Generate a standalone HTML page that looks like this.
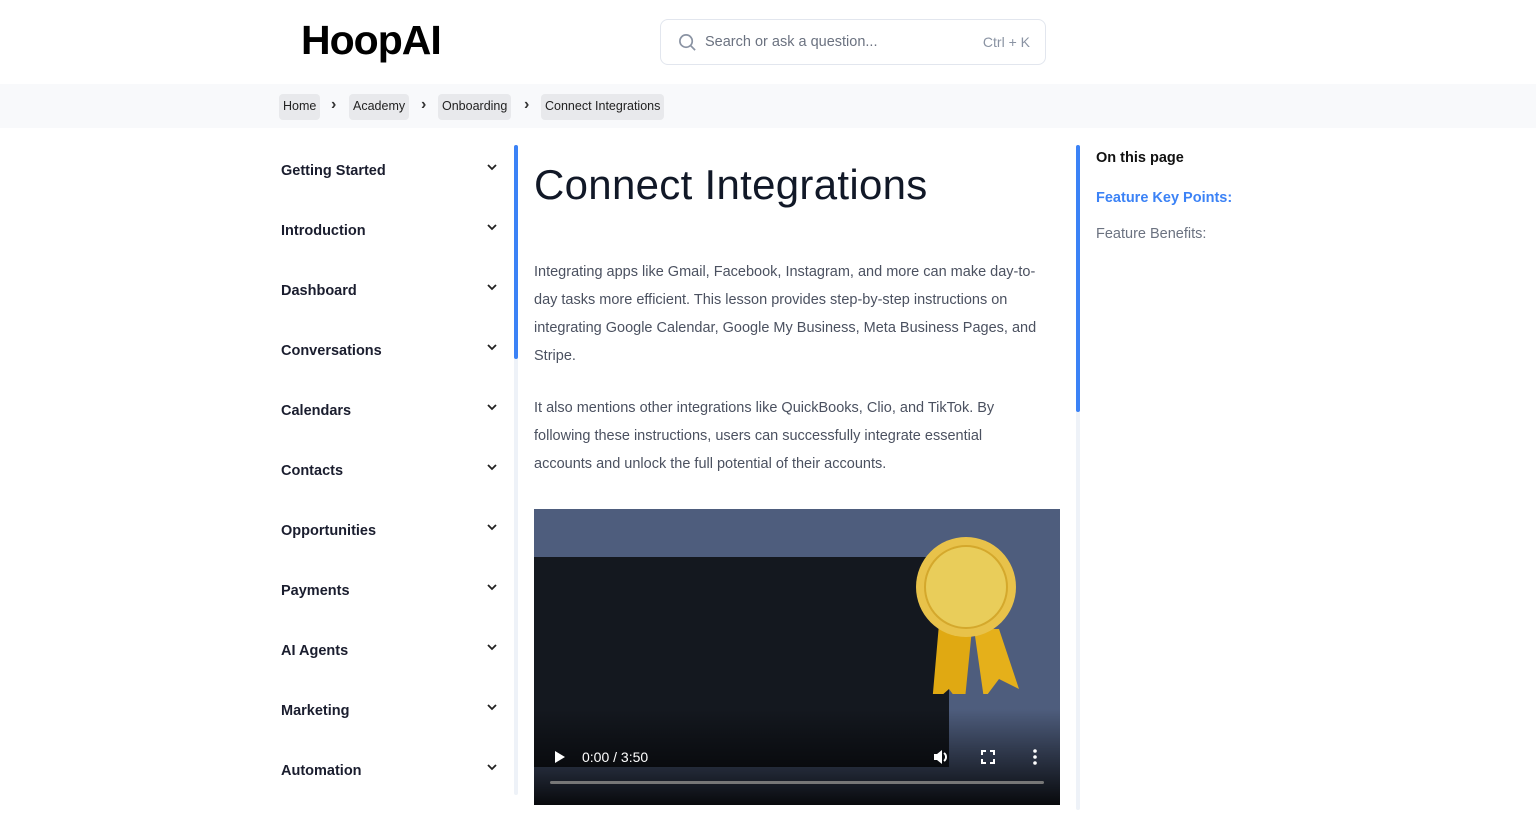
<!DOCTYPE html>
<html><head><meta charset="utf-8"><style>
*{margin:0;padding:0;box-sizing:border-box}
body{width:1536px;height:826px;overflow:hidden;background:#fff;font-family:"Liberation Sans",sans-serif;position:relative}
.hdr{position:absolute;left:0;top:0;width:1536px;height:84px;background:#fff;box-shadow:0 1px 3px rgba(0,0,0,.06)}
.logo{position:absolute;left:301px;top:17px;font-size:41px;font-weight:bold;color:#000;letter-spacing:-1px}
.search{position:absolute;left:660px;top:19px;width:386px;height:46px;border:1px solid #e2e6ee;border-radius:8px}
.search .t{position:absolute;left:44px;top:14px;font-size:14.5px;color:#6b7280}
.search .k{position:absolute;right:15px;top:14px;font-size:14px;color:#8a93a3}
.bc{position:absolute;left:0;top:84px;width:1536px;height:44px;background:#f8f9fb}
.chip{position:absolute;top:94px;height:26px;background:#e8e9ec;border-radius:4px;font-size:12.5px;color:#222;line-height:25px;padding:0 4px}
.sep{position:absolute;top:96px;font-size:16px;color:#333;font-weight:bold}
.nav{position:absolute;left:281px;font-size:14.5px;font-weight:bold;color:#1a1d2e}
.chev{position:absolute;left:486px}
.sb{position:absolute;width:4px;border-radius:2px}
h1{position:absolute;left:534px;top:161px;font-size:42px;font-weight:normal;color:#111827;letter-spacing:.3px}
.p{position:absolute;left:534px;width:515px;font-size:14.5px;line-height:28px;color:#4b5160}
.video{position:absolute;left:534px;top:509px;width:526px;height:296px;background:#4e5d7d;overflow:hidden}
</style></head><body>
<div class="hdr">
<div class="logo">HoopAI</div>
<div class="search">
<svg style="position:absolute;left:17px;top:13px" width="19" height="19" viewBox="0 0 20 20" fill="none" stroke="#8a93a3" stroke-width="1.8"><circle cx="8.5" cy="8.5" r="6.5"/><path d="M13.5 13.5L18 18"/></svg>
<span class="t">Search or ask a question...</span><span class="k">Ctrl + K</span></div>
</div>
<div class="bc"></div>
<div class="chip" style="left:279px">Home</div><span class="sep" style="left:331px">›</span>
<div class="chip" style="left:349px">Academy</div><span class="sep" style="left:421px">›</span>
<div class="chip" style="left:438px">Onboarding</div><span class="sep" style="left:524px">›</span>
<div class="chip" style="left:541px">Connect Integrations</div>

<div class="nav" style="top:163px">Getting Started</div>
<div class="nav" style="top:223px">Introduction</div>
<div class="nav" style="top:283px">Dashboard</div>
<div class="nav" style="top:343px">Conversations</div>
<div class="nav" style="top:403px">Calendars</div>
<div class="nav" style="top:463px">Contacts</div>
<div class="nav" style="top:523px">Opportunities</div>
<div class="nav" style="top:583px">Payments</div>
<div class="nav" style="top:643px">AI Agents</div>
<div class="nav" style="top:703px">Marketing</div>
<div class="nav" style="top:763px">Automation</div>
<svg class="chev" style="top:163px" width="12" height="8" viewBox="0 0 12 8" fill="none" stroke="#222" stroke-width="1.8"><path d="M2 2l4 4 4-4"/></svg>
<svg class="chev" style="top:223px" width="12" height="8" viewBox="0 0 12 8" fill="none" stroke="#222" stroke-width="1.8"><path d="M2 2l4 4 4-4"/></svg>
<svg class="chev" style="top:283px" width="12" height="8" viewBox="0 0 12 8" fill="none" stroke="#222" stroke-width="1.8"><path d="M2 2l4 4 4-4"/></svg>
<svg class="chev" style="top:343px" width="12" height="8" viewBox="0 0 12 8" fill="none" stroke="#222" stroke-width="1.8"><path d="M2 2l4 4 4-4"/></svg>
<svg class="chev" style="top:403px" width="12" height="8" viewBox="0 0 12 8" fill="none" stroke="#222" stroke-width="1.8"><path d="M2 2l4 4 4-4"/></svg>
<svg class="chev" style="top:463px" width="12" height="8" viewBox="0 0 12 8" fill="none" stroke="#222" stroke-width="1.8"><path d="M2 2l4 4 4-4"/></svg>
<svg class="chev" style="top:523px" width="12" height="8" viewBox="0 0 12 8" fill="none" stroke="#222" stroke-width="1.8"><path d="M2 2l4 4 4-4"/></svg>
<svg class="chev" style="top:583px" width="12" height="8" viewBox="0 0 12 8" fill="none" stroke="#222" stroke-width="1.8"><path d="M2 2l4 4 4-4"/></svg>
<svg class="chev" style="top:643px" width="12" height="8" viewBox="0 0 12 8" fill="none" stroke="#222" stroke-width="1.8"><path d="M2 2l4 4 4-4"/></svg>
<svg class="chev" style="top:703px" width="12" height="8" viewBox="0 0 12 8" fill="none" stroke="#222" stroke-width="1.8"><path d="M2 2l4 4 4-4"/></svg>
<svg class="chev" style="top:763px" width="12" height="8" viewBox="0 0 12 8" fill="none" stroke="#222" stroke-width="1.8"><path d="M2 2l4 4 4-4"/></svg>

<div class="sb" style="left:514px;top:145px;height:650px;background:#eef2f8"></div>
<div class="sb" style="left:514px;top:145px;height:214px;background:#3b82f6"></div>
<div class="sb" style="left:1076px;top:145px;height:665px;background:#eef2f8"></div>
<div class="sb" style="left:1076px;top:145px;height:267px;background:#3b82f6"></div>

<h1>Connect Integrations</h1>
<div class="p" style="top:258px">Integrating apps like Gmail, Facebook, Instagram, and more can make day-to-day tasks more efficient. This lesson provides step-by-step instructions on integrating Google Calendar, Google My Business, Meta Business Pages, and Stripe.</div>
<div class="p" style="top:394px;width:490px">It also mentions other integrations like QuickBooks, Clio, and TikTok. By following these instructions, users can successfully integrate essential accounts and unlock the full potential of their accounts.</div>

<div class="video">
<div style="position:absolute;left:0;top:48px;width:415px;height:210px;background:#14181f"></div>
<div style="position:absolute;left:0;top:200px;width:526px;height:96px;background:linear-gradient(rgba(0,0,0,0),rgba(0,0,0,.9))"></div>
<svg style="position:absolute;left:380px;top:20px" width="130" height="165" viewBox="0 0 130 165">
<path d="M25 95 L18 175 L35 160 L50 180 L58 100Z" fill="#e0a912"/>
<path d="M60 100 L70 170 L85 150 L105 160 L85 100Z" fill="#e5b01a"/>
<circle cx="52" cy="58" r="50" fill="#e8c24a"/><circle cx="52" cy="58" r="41" fill="#e9cd5a" stroke="#d4a82c" stroke-width="2"/>
</svg>
<svg style="position:absolute;left:20px;top:241px" width="12" height="14" viewBox="0 0 12 14"><path d="M1 1L11 7L1 13Z" fill="#fff"/></svg>
<div style="position:absolute;left:48px;top:240px;font-size:14px;color:#fff">0:00 / 3:50</div>
<svg style="position:absolute;left:398px;top:239px" width="18" height="18" viewBox="0 0 18 18" fill="#fff"><path d="M2 6h3l5-4v14l-5-4H2z"/><path d="M12 5a5 5 0 010 8" stroke="#fff" stroke-width="2" fill="none"/></svg>
<svg style="position:absolute;left:447px;top:241px" width="14" height="14" viewBox="0 0 14 14" fill="none" stroke="#fff" stroke-width="2"><path d="M1 5V1h4M9 1h4v4M13 9v4H9M5 13H1V9"/></svg>
<svg style="position:absolute;left:498px;top:239px" width="6" height="18" viewBox="0 0 6 18" fill="#fff"><circle cx="3" cy="3" r="1.8"/><circle cx="3" cy="9" r="1.8"/><circle cx="3" cy="15" r="1.8"/></svg>
<div style="position:absolute;left:16px;top:272px;width:494px;height:3px;background:#777;border-radius:2px"></div>
</div>

<div style="position:absolute;left:1096px;top:150px;font-size:14.5px;font-weight:bold;color:#111">On this page</div>
<div style="position:absolute;left:1096px;top:190px;font-size:14.5px;font-weight:bold;color:#3b82f6">Feature Key Points:</div>
<div style="position:absolute;left:1096px;top:226px;font-size:14.5px;color:#6b7280">Feature Benefits:</div>
</body></html>
